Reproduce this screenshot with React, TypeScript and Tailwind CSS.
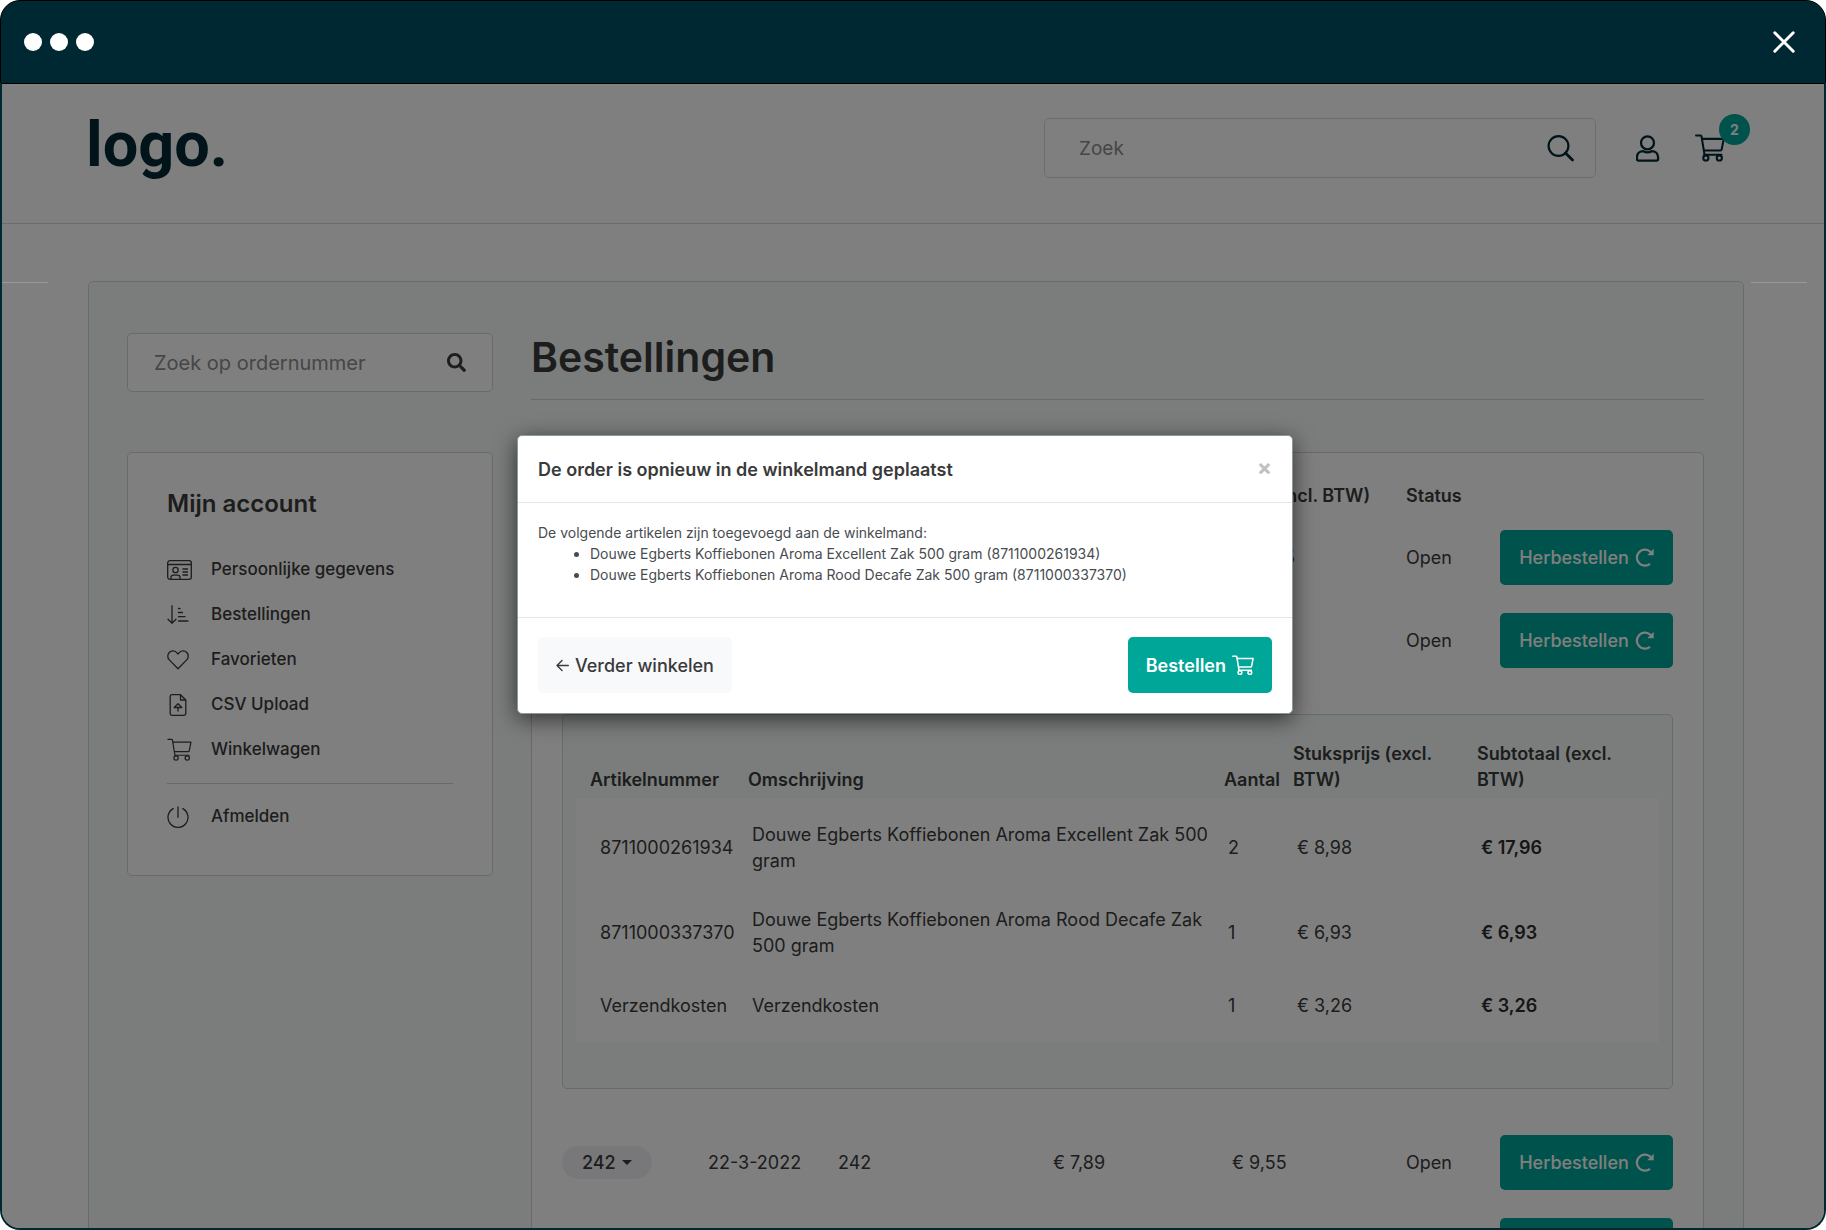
import { ReactNode } from 'react';
import { FaSearch } from 'react-icons/fa';

interface IconProps {
  className?: string;
  strokeWidth?: number;
}

interface Order {
  id: string;
  date: string;
  reference: string;
  excl: string;
  incl: string;
  status: string;
  expanded?: boolean;
}

const SearchIcon = ({ className }: IconProps) => (
  <svg className={className} width="27" height="27" viewBox="0 0 27 27" fill="none" stroke="currentColor" strokeWidth="2.2">
    <circle cx="11.5" cy="11" r="9.9" />
    <path d="M18.5 18l7 7" strokeWidth="2.8" strokeLinecap="round" />
  </svg>
);

const UserIcon = ({ className }: IconProps) => (
  <svg className={className} width="24" height="27" viewBox="0 0 24 27" fill="none" stroke="currentColor" strokeWidth="2.3">
    <circle cx="11.5" cy="7.8" r="6.5" />
    <path
      d="M7.500 16.200c1.300.8 2.600 1.100 4 1.100s2.700-.3 4-1.100c4 0 6.600 2.500 6.600 6.300v1.500c0 .9-.7 1.600-1.600 1.600h-18c-.9 0-1.600-.7-1.600-1.600v-1.500c0-3.800 2.600-6.300 6.600-6.300z"
      strokeLinejoin="round"
    />
  </svg>
);

const CartIcon = ({ className, strokeWidth = 1.4 }: IconProps) => (
  <svg className={className} viewBox="0 0 29 27" fill="none" stroke="currentColor" strokeWidth={strokeWidth}>
    <path d="M1 1.500h4.300a1 1 0 0 1 1 .8L9.200 20" strokeLinecap="round" />
    <path d="M6.500 4.700h21.300l-2 10.200a1.200 1.200 0 0 1-1.200 1H8.500" strokeLinejoin="round" />
    <path d="M9 20h16.600" strokeLinecap="round" />
    <circle cx="10.500" cy="23.200" r="2.500" />
    <circle cx="23.500" cy="23.200" r="2.500" />
  </svg>
);

const CardIcon = () => (
  <svg width="25" height="20" viewBox="0 0 25 20" fill="none" stroke="currentColor" strokeWidth="1.3">
    <rect x=".7" y=".7" width="23.600" height="18.600" rx="2.200" />
    <path d="M.7 4.500h23.600M15.500 9h5.500M15.500 12h5.500M15.500 15h5.500" />
    <circle cx="8.500" cy="10" r="2.700" />
    <path d="M4 19v-1.500c0-1.400 1-2.300 2.400-2.300h4.200c1.400 0 2.400.9 2.400 2.300V19" />
  </svg>
);

const SortIcon = () => (
  <svg width="22" height="19" viewBox="0 0 22 19" fill="none" stroke="currentColor" strokeWidth="1.300" strokeLinecap="round" strokeLinejoin="round">
    <path d="M5 .7v17.300M1 14.200l4 4 4-4M11.500 3.500h1.500M11.500 7.500h4M11.500 11.700h6.500M11.500 16h9.500" />
  </svg>
);

const HeartIcon = () => (
  <svg width="22" height="20" viewBox="0 0 22 20" fill="none" stroke="currentColor" strokeWidth="1.300" strokeLinejoin="round">
    <path d="M11 18.800L2.300 9.900C.3 7.800.3 4.500 2.200 2.500c2-2.200 5.300-2.200 7.300-.1L11 4l1.500-1.600c2-2.100 5.300-2.100 7.300.1 1.900 2 1.900 5.300-.1 7.400z" />
  </svg>
);

const UploadIcon = () => (
  <svg width="22" height="22" viewBox="0 0 22 22" fill="none" stroke="currentColor" strokeWidth="1.300" strokeLinejoin="round">
    <path d="M13.500.7H5C4 .7 3.200 1.500 3.200 2.500v17c0 1 .8 1.800 1.800 1.800h12c1 0 1.800-.8 1.800-1.800V6z" />
    <path d="M13.500.7V6h5.300M11 17.500v-4M7.200 13.500L11 9.800l3.800 3.700z" />
  </svg>
);

const PowerIcon = () => (
  <svg width="22" height="22" viewBox="0 0 22 22" fill="none" stroke="currentColor" strokeWidth="1.300" strokeLinecap="round">
    <path d="M11 .8v10.500M6.200 2.600a10 10 0 1 0 9.600 0" />
  </svg>
);

const ReloadIcon = () => (
  <svg width="19" height="19" viewBox="0 0 19 19" fill="none" stroke="currentColor" strokeWidth="2.200">
    <path d="M15 15.800A8 8 0 1 1 14.600 3.200L16.500 5" />
    <path d="M18.700.8v6.400h-6.400z" fill="currentColor" stroke="none" />
  </svg>
);

const accountLinks: { label: string; icon: ReactNode }[] = [
  { label: 'Persoonlijke gegevens', icon: <CardIcon /> },
  { label: 'Bestellingen', icon: <SortIcon /> },
  { label: 'Favorieten', icon: <HeartIcon /> },
  { label: 'CSV Upload', icon: <UploadIcon /> },
  { label: 'Winkelwagen', icon: <CartIcon className="w-[25px]" /> },
];

const orders: Order[] = [
  { id: '244', date: '22-3-2022', reference: '244', excl: '€ 15,25', incl: '€ 18,45', status: 'Open' },
  { id: '243', date: '22-3-2022', reference: '243', excl: '€ 7,89', incl: '€ 9,55', status: 'Open', expanded: true },
  { id: '242', date: '22-3-2022', reference: '242', excl: '€ 7,89', incl: '€ 9,55', status: 'Open' },
  { id: '241', date: '22-3-2022', reference: '241', excl: '€ 7,89', incl: '€ 9,55', status: 'Open' },
];

const articles = [
  { number: '8711000261934', name: 'Douwe Egberts Koffiebonen Aroma Excellent Zak 500 gram', count: 2, price: '€ 8,98', total: '€ 17,96' },
  { number: '8711000337370', name: 'Douwe Egberts Koffiebonen Aroma Rood Decafe Zak 500 gram', count: 1, price: '€ 6,93', total: '€ 6,93' },
  { number: 'Verzendkosten', name: 'Verzendkosten', count: 1, price: '€ 3,26', total: '€ 3,26' },
];

const TitleBar = () => (
  <div className="flex h-[84px] shrink-0 items-center justify-between rounded-t-[20px] border border-black bg-[#002833] pr-[30px] pl-[23px]">
    <div className="flex gap-2">
      <span className="size-[18px] rounded-full bg-white" />
      <span className="size-[18px] rounded-full bg-white" />
      <span className="size-[18px] rounded-full bg-white" />
    </div>
    <button type="button" aria-label="Sluiten">
      <svg width="22" height="22" viewBox="0 0 22 22" stroke="white" strokeWidth="3" strokeLinecap="round">
        <path d="M1.800 1.800l18.400 18.400M20.200 1.800L1.800 20.200" />
      </svg>
    </button>
  </div>
);

const Header = () => (
  <header className="flex h-[140px] items-start justify-between border-b border-[#d2d8da] pt-[34px] pr-[99px] pl-[84px] text-[#002833]">
    <a href="#" className="-mt-[9px] font-[Roboto] text-[63px] leading-[72px] font-bold">
      logo.
    </a>
    <div className="flex items-center">
      <label className="flex h-[60px] w-[552px] items-center rounded-[5px] border border-[#d2dadb] pr-[21px] pl-[34px]">
        <input
          type="search"
          aria-label="Zoek"
          placeholder="Zoek"
          className="min-w-0 flex-1 pt-[2px] text-[19px] outline-none placeholder:text-[#8c8c8c]"
        />
        <SearchIcon />
      </label>
      <a href="#" aria-label="Mijn account" className="ml-10">
        <UserIcon />
      </a>
      <a href="#" aria-label="Winkelwagen" className="relative ml-[35px]">
        <CartIcon className="w-[30px]" strokeWidth={2} />
        <span className="absolute -top-5 left-6 flex size-[31px] items-center justify-center rounded-full bg-[#00a698] text-sm font-bold text-white">
          2
        </span>
      </a>
    </div>
  </header>
);

const Sidebar = () => (
  <aside className="w-[366px] shrink-0">
    <label className="flex h-[59px] items-center rounded-[5px] border border-[#cdd6d8] bg-white pr-[26px] pl-[26px]">
      <input
        type="search"
        aria-label="Zoek op ordernummer"
        placeholder="Zoek op ordernummer"
        className="min-w-0 flex-1 text-[20px] outline-none placeholder:text-[#8c8c8c]"
      />
      <FaSearch size={19} />
    </label>
    <nav className="mt-[60px] rounded-[5px] border border-[#cdd6d8] bg-white px-[39px] pt-[35px] pb-9 text-[17px]">
      <h2 className="text-[24px] leading-8 font-semibold">Mijn account</h2>
      <ul className="mt-[27px] border-b border-[#cfd5d6] pb-[11px]">
        {accountLinks.map(({ label, icon }) => (
          <li key={label}>
            <a href="#" className="flex h-[45px] items-center font-medium">
              <span className="w-11">{icon}</span>
              {label}
            </a>
          </li>
        ))}
      </ul>
      <a href="#" className="mt-[10px] flex h-[45px] items-center font-medium">
        <span className="w-11">
          <PowerIcon />
        </span>
        Afmelden
      </a>
    </nav>
  </aside>
);

const OrderDetails = () => (
  <div className="rounded-[5px] border border-[#cdd6d8] bg-[#f5faf8] px-[13px] pt-[26px] pb-[46px]">
    <table className="w-full table-fixed text-left">
      <colgroup>
        <col className="w-[158px]" />
        <col />
        <col className="w-[69px]" />
        <col className="w-[184px]" />
        <col className="w-[182px]" />
      </colgroup>
      <thead>
        <tr className="align-bottom leading-[26px]">
          <th className="pb-[6px] pl-[14px] font-semibold">Artikelnummer</th>
          <th className="pb-[6px] pl-[14px] font-semibold">Omschrijving</th>
          <th className="pb-[6px] font-semibold">Aantal</th>
          <th className="pr-8 pb-[6px] font-semibold">Stuksprijs (excl. BTW)</th>
          <th className="pr-8 pb-[6px] font-semibold">Subtotaal (excl. BTW)</th>
        </tr>
      </thead>
      <tbody className="bg-white leading-[26px]">
        {articles.map(({ number, name, count, price, total }) => (
          <tr key={number} className="h-[73px] first:h-[97px]">
            <td className="pl-6">{number}</td>
            <td className="pr-1 pl-[18px]">{name}</td>
            <td className="pl-1">{count}</td>
            <td className="pl-1">{price}</td>
            <td className="pl-1 font-semibold text-[#2c2c2c]">{total}</td>
          </tr>
        ))}
      </tbody>
    </table>
  </div>
);

const OrderRow = ({ order }: { order: Order }) => (
  <>
    <tr className="h-[83px]">
      <td>
        <button
          type="button"
          aria-expanded={!!order.expanded}
          className="flex h-[33px] items-center gap-[6px] rounded-full bg-[#f0f1f5] px-5 font-medium"
        >
          {order.id}
          <span className="border-x-5 border-t-5 border-x-transparent border-t-current" />
        </button>
      </td>
      <td>{order.date}</td>
      <td>{order.reference}</td>
      <td>{order.excl}</td>
      <td>{order.incl}</td>
      <td>{order.status}</td>
      <td>
        <button
          type="button"
          className="flex h-[55px] w-full items-center justify-center gap-[6px] rounded-[5px] bg-[#00a698] font-medium text-white"
        >
          Herbestellen
          <ReloadIcon />
        </button>
      </td>
    </tr>
    {order.expanded && (
      <tr>
        <td colSpan={7} className="py-8">
          <OrderDetails />
        </td>
      </tr>
    )}
  </>
);

const Orders = () => (
  <main className="min-w-0 flex-1">
    <h1 className="border-b border-[#cfd5d6] pb-[18px] text-[41px] leading-[48px] font-semibold">Bestellingen</h1>
    <div className="mt-[52px] rounded-[5px] border border-[#cdd6d8] bg-white px-[30px] pt-[21px] pb-8">
      <table className="w-full table-fixed text-left">
        <colgroup>
          <col className="w-[146px]" />
          <col className="w-[130px]" />
          <col />
          <col className="w-[179px]" />
          <col className="w-[174px]" />
          <col className="w-[94px]" />
          <col className="w-[173px]" />
        </colgroup>
        <thead>
          <tr className="h-[42px] whitespace-nowrap">
            <th className="font-semibold">Order</th>
            <th className="font-semibold">Datum</th>
            <th className="font-semibold">Referentie</th>
            <th className="font-semibold">Prijs (excl. BTW)</th>
            <th className="font-semibold">Prijs (incl. BTW)</th>
            <th className="font-semibold">Status</th>
            <th aria-label="Acties" />
          </tr>
        </thead>
        <tbody>
          {orders.map((order) => (
            <OrderRow key={order.id} order={order} />
          ))}
        </tbody>
      </table>
    </div>
  </main>
);

const ReorderDialog = () => (
  <div
    role="dialog"
    aria-labelledby="reorder-title"
    className="w-[776px] rounded-[5px] border border-[#8d979c] bg-white shadow-[0_5px_22px_rgba(0,0,0,0.6)]"
  >
    <div className="flex h-[67px] items-center justify-between border-b border-[#e3e5e7] px-5">
      <h2 id="reorder-title" className="font-semibold">
        De order is opnieuw in de winkelmand geplaatst
      </h2>
      <button type="button" aria-label="Sluiten" className="pb-1 text-[22px] leading-none font-bold text-[#c0c0c0]">
        ×
      </button>
    </div>
    <div className="px-5 pt-[19px] pb-8 text-sm leading-[21px] text-[#484c50]">
      <p>De volgende artikelen zijn toegevoegd aan de winkelmand:</p>
      <ul className="list-disc pl-[52px]">
        <li>Douwe Egberts Koffiebonen Aroma Excellent Zak 500 gram (8711000261934)</li>
        <li>Douwe Egberts Koffiebonen Aroma Rood Decafe Zak 500 gram (8711000337370)</li>
      </ul>
    </div>
    <div className="flex justify-between border-t border-[#e3e5e7] px-5 pt-[19px] pb-5">
      <button type="button" className="flex h-14 items-center gap-[6px] rounded-[5px] bg-[#f8f9fb] px-[18px] font-medium">
        <svg width="13" height="13" viewBox="0 0 13 13" fill="none" stroke="currentColor" strokeWidth="1.400" strokeLinecap="round" strokeLinejoin="round">
          <path d="M12.300 6.500H1M6 1.500l-5 5 5 5" />
        </svg>
        Verder winkelen
      </button>
      <button type="button" className="flex h-14 items-center gap-[6px] rounded-[5px] bg-[#00a698] px-[18px] font-semibold text-white">
        Bestellen
        <CartIcon className="w-[22px]" strokeWidth={2} />
      </button>
    </div>
  </div>
);

const App = () => {
  return (
    <div className="flex h-screen flex-col overflow-hidden bg-white font-[Inter,sans-serif] text-[18px] text-[#3a3a3a]">
      <TitleBar />
      <div className="relative min-h-0 flex-1 overflow-hidden rounded-b-[20px] border-x-2 border-b-2 border-[#002833] bg-white">
        <Header />
        <div className="mt-[57px] mr-20 ml-[86px] flex gap-[38px] rounded-[5px] border border-[#cdd6d8] bg-[#f5faf8] pt-[51px] pr-[39px] pb-12 pl-[38px]">
          <Sidebar />
          <Orders />
        </div>
        <div className="absolute inset-0 flex items-start justify-center bg-black/50 pt-[351px] pr-4">
          <ReorderDialog />
        </div>
        <span className="absolute top-[198px] left-0 h-px w-[46px] bg-[#999999]" />
        <span className="absolute top-[198px] right-[17px] h-px w-14 bg-[#999999]" />
      </div>
    </div>
  );
};

export default App;
